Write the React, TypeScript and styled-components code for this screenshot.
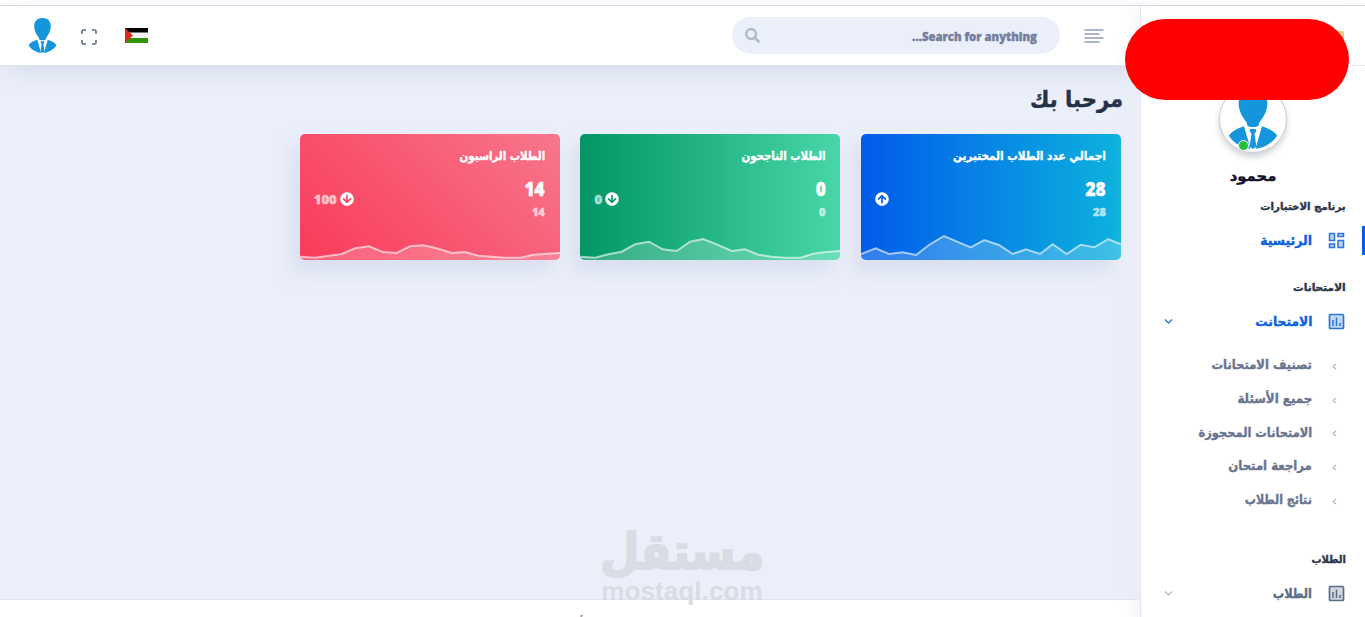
import styled, { createGlobalStyle } from 'styled-components';
import { FaArrowCircleDown, FaArrowCircleUp, FaSearch } from 'react-icons/fa';

const GlobalStyle = createGlobalStyle`
	* {
		box-sizing: border-box;
	}

	body {
		margin: 0;
		overflow: hidden;
		background: #ffffff;
		font-family: 'DejaVu Sans', 'Open Sans', sans-serif;
		font-weight: 700;
	}
`;

const Page = styled.div`
	position: relative;
	display: flex;
	direction: rtl;
	width: 1365px;
	height: 617px;
	padding-top: 5px;
	overflow: hidden;

	&::before {
		content: '';
		position: absolute;
		inset: 5px 0 auto 0;
		height: 1px;
		background: #d9dadd;
		z-index: 3;
	}
`;

/* Scales the glyphs horizontally, the row keeps its own flow size. */
const Label = styled.span<{ $scale?: number; $origin?: string }>`
	display: inline-block;
	white-space: nowrap;
	transform: scaleX(${ p => p.$scale ?? 1 });
	transform-origin: ${ p => p.$origin ?? 'right' } center;
	-webkit-text-stroke: 0.4px currentColor;
`;

/* ---------- sidebar ---------- */

const SidebarContainer = styled.aside`
	position: relative;
	z-index: 2;
	flex: 0 0 225px;
	border-left: 1px solid #e3e6f0;
	background: #ffffff;
	box-shadow: 0 8px 24px #e8ebf6;
`;

const Brand = styled.div`
	display: flex;
	align-items: center;
	height: 61px;
	padding: 0 20px 0 0;
	border-bottom: 1px solid #e6e8ee;
`;

const Profile = styled.div`
	display: flex;
	flex-direction: column;
	align-items: center;
	padding-top: 19px;
`;

const AvatarRing = styled.div`
	position: relative;
	display: flex;
	align-items: center;
	justify-content: center;
	width: 68px;
	height: 68px;
	border: 1px solid #c9cede;
	border-radius: 50%;
	background: #ffffff;
	box-shadow: 0 4px 6px rgba(40, 48, 70, 0.22);
`;

const OnlineDot = styled.span`
	position: absolute;
	left: 18px;
	bottom: 1px;
	width: 11px;
	height: 11px;
	border: 1px solid #ffffff;
	border-radius: 50%;
	background: #22c03c;
`;

const ProfileName = styled.div`
	height: 24px;
	margin-top: 11px;
	color: #14112d;
	font-size: 14px;
	line-height: 24px;
`;

const Category = styled.div<{ $top: number }>`
	height: 20px;
	margin-top: ${ p => p.$top }px;
	padding-right: 19px;
	color: #2c364c;
	font-size: 10px;
	line-height: 20px;
`;

const MenuItem = styled.div<{ $active?: boolean; $current?: boolean }>`
	display: flex;
	align-items: center;
	height: 29px;
	margin-top: 9px;
	padding: 0 17px 0 23px;
	border-right: 3px solid ${ p => p.$current ? '#0162e8' : 'transparent' };
	color: ${ p => p.$active ? '#0b62db' : '#5b6e88' };
	font-size: 13px;
	line-height: 29px;

	> svg:first-child {
		margin-left: 16px;
	}
`;

const Chevron = styled.svg`
	margin-right: auto;
`;

const SubMenu = styled.div`
	padding-top: 12px;
`;

const SubItem = styled.div`
	display: flex;
	align-items: center;
	height: 33.7px;
	padding-right: 28px;
	color: #6a7590;
	font-size: 13px;

	svg {
		margin: 3px 0 0 20px;
	}
`;

/* ---------- main ---------- */

const Main = styled.main`
	display: flex;
	flex: 1;
	flex-direction: column;
	min-width: 0;
	background: #ebeffa;
`;

const Header = styled.header`
	position: relative;
	z-index: 1;
	display: flex;
	flex: 0 0 61px;
	align-items: center;
	padding: 0 36px 0 28px;
	border-bottom: 1px solid #dee4ed;
	background: #ffffff;
	box-shadow: 5px 7px 26px -5px #cdd4e7;

	> svg {
		margin-top: 2px;
	}
`;

const SearchField = styled.div`
	display: flex;
	align-items: center;
	justify-content: space-between;
	width: 328px;
	height: 37px;
	margin-right: 24px;
	padding: 0 23px 0 13px;
	border-radius: 19px;
	background: #ebeffa;
	color: #737f9e;
	font-family: 'Open Sans', sans-serif;
	font-size: 12.5px;
	font-weight: 800;

	span {
		padding-top: 2px;
	}

	svg {
		color: #b1bacb;
	}
`;

const HeaderActions = styled.div`
	display: flex;
	align-items: center;
	margin-right: auto;

	> svg:nth-child(2) {
		margin: 3px 28px 0 24px;
	}
`;

const Content = styled.section`
	flex: 1;
	padding: 17px 17px 0 0;
`;

const Title = styled.h2`
	height: 36px;
	margin: 0;
	color: #242f48;
	font-size: 23px;
	line-height: 32px;
`;

const CardRow = styled.div`
	display: flex;
	gap: 20.6px;
	margin-top: 15px;
	padding-right: 2px;
`;

const Card = styled.article<{ $background: string }>`
	display: flex;
	flex-direction: column;
	width: 260px;
	height: 126px;
	overflow: hidden;
	border-radius: 5px;
	background: ${ p => p.$background };
	box-shadow: -8px 12px 18px 0 rgba(193, 200, 222, 0.4);
	color: #ffffff;
`;

const CardBody = styled.div`
	flex: 0 0 96px;
	padding: 12px 15px 0 14px;
`;

const CardTitle = styled.div`
	height: 20px;
	font-size: 11.5px;
	line-height: 20px;
`;

const CardStats = styled.div`
	display: flex;
	align-items: center;
	justify-content: space-between;
	height: 50px;
	margin-top: 8px;
	font-family: 'Open Sans', sans-serif;
`;

const Amount = styled.div`
	font-size: 18.5px;
	font-weight: 800;
	line-height: 26px;
`;

const SubAmount = styled.div`
	font-size: 11px;
	font-weight: 800;
	line-height: 20px;
	opacity: 0.68;
`;

const Trend = styled.div`
	display: flex;
	align-items: center;
	gap: 3px;
	font-size: 13px;
	font-weight: 800;

	span {
		opacity: 0.68;
	}
`;

const Footer = styled.footer`
	display: flex;
	flex: 0 0 18px;
	justify-content: center;
	overflow: hidden;
	padding-left: 23px;
	border-top: 1px solid #dfe3ed;
	background: #ffffff;
	color: #6b7690;
	font-size: 12px;
	line-height: 46px;
`;

/* ---------- overlays ---------- */

const Redaction = styled.div`
	position: absolute;
	z-index: 5;
	top: 19px;
	left: 1125px;
	width: 224px;
	height: 81px;
	border-radius: 41px;
	background: #ff0000;
`;

const Watermark = styled.div`
	position: absolute;
	z-index: 4;
	top: 523px;
	left: 582px;
	display: flex;
	flex-direction: column;
	align-items: center;
	width: 200px;
	color: #d9dce3;
`;

const WatermarkArabic = styled.div`
	height: 54px;
	font-size: 50px;
	line-height: 58px;

	span {
		-webkit-text-stroke: 2px #d9dce3;
	}
`;

const WatermarkLatin = styled.div`
	direction: ltr;
	font-family: 'Liberation Sans', sans-serif;
	font-size: 26.2px;
	line-height: 28px;
`;

const Person = ({ width, height }: { width: number; height: number }) => (
	<svg width={ width } height={ height } viewBox="0 0 30 36" fill="#1495dc" preserveAspectRatio="none">
		<path d="M15 0C9.500 0 6.400 3.600 6.400 8.600c0 4.800 2.300 8.400 4.500 11.100.6.8.4 1.600.8 2.300.8 1.100 5.800 1.100 6.600 0 .4-.7.2-1.500.8-2.300 2.200-2.700 4.500-6.300 4.500-11.100C23.600 3.600 20.500 0 15 0z" />
		<path d="M9.600 22.300C6 23.500 2.500 25 .500 28c3.400 5 8.500 7.500 13 7.900zM20.400 22.300C24 23.500 27.500 25 29.500 28c-3.400 5-8.500 7.500-13 7.900z" />
		<path d="M13.400 24h3.200l.4 1.300-1.100 1.500 1.100 7.700-2 1.500-2-1.500 1.100-7.700-1.100-1.500z" />
	</svg>
);

const ChartIcon = ({ color }: { color: string }) => (
	<svg width="17" height="17" viewBox="0 0 17 17" fill="none" stroke={ color }>
		<rect x="1.500" y="1.500" width="14" height="14" rx="1" strokeWidth="1.700" fill={ color } fillOpacity="0.28" />
		<path d="M5 7v6M8.500 4.500V13M12 10v3" strokeWidth="1.500" />
	</svg>
);

const DashboardIcon = () => (
	<svg width="17" height="17" viewBox="0 0 17 17" fill="#0162e8" fillOpacity="0.28" stroke="#2b74dc" strokeWidth="1.500">
		<path d="M1.500 1.500h5v7h-5zM10 1.500h5.500v3H10zM1.500 12h5v3.500h-5zM10 8.500h5.500v7H10z" />
	</svg>
);

const Down = ({ color }: { color: string }) => (
	<Chevron width="9" height="7" viewBox="0 0 9 7" fill="none" stroke={ color } strokeWidth="1.300">
		<path d="M1 1.500l3.500 3.500L8 1.500" />
	</Chevron>
);

const submenu = [
	{ text: 'تصنيف الامتحانات', scale: 0.89 },
	{ text: 'جميع الأسئلة', scale: 0.91 },
	{ text: 'الامتحانات المحجوزة', scale: 0.88 },
	{ text: 'مراجعة امتحان', scale: 0.9 },
	{ text: 'نتائج الطلاب', scale: 0.85 }
];

const cards = [
	{
		title: 'اجمالي عدد الطلاب المختبرين',
		scale: 0.91,
		amount: '28',
		trend: '',
		up: true,
		background: 'linear-gradient(to left, #0db2de 0%, #005bea 100%)',
		line: '0,24 14.7,18.3 28,24 41.7,22.3 55,25 69,14.3 83,6 109.7,17.3 123.3,10 138,15 151.7,24 165,19.3 179,24 191.7,14.3 205.7,24 219.7,14.7 233.3,17.3 247.3,9 260,14.3'
	},
	{
		title: 'الطلاب الناجحون',
		scale: 0.89,
		amount: '0',
		trend: '0',
		up: false,
		background: 'linear-gradient(to left, #48d6a8 0%, #029666 100%)',
		line: '0,26.7 15,27.7 28.3,24.3 41.7,21.7 55,14.3 69,11.7 82.7,19.3 96.7,21 110,11.7 123.3,9 136.7,14.3 151.7,21 165,19.3 178.3,24.7 191.7,26.7 205,27.7 220.7,27.7 233.3,23.7 246,22 260,21'
	},
	{
		title: 'الطلاب الراسبون',
		scale: 0.89,
		amount: '14',
		trend: '100',
		up: false,
		background: 'linear-gradient(45deg, #f93a5a, #f7778c)',
		line: '0,26.7 15,27.7 41.7,24 55,18.3 69,16.3 82.7,22 96.7,23 110,16.3 123.3,15.3 136.7,18.3 151.7,23 165,22 178.3,25.7 205,27.7 220.7,27.7 233.3,24.7 260,23'
	}
];

const Sidebar = () => (
	<SidebarContainer>
		<Brand>
			<svg width="12" height="50" viewBox="0 0 12 50">
				<path d="M0 22q5-2 11-.5v9.500H0z" fill="#e9cf7c" />
				<path d="M0 50L9 50l2.500-7V60z" fill="#f3e3b0" />
			</svg>
		</Brand>
		<Profile>
			<AvatarRing>
				<Person width={ 50 } height={ 60 } />
				<OnlineDot />
			</AvatarRing>
			<ProfileName><Label $scale={ 1.06 } $origin="center">محمود</Label></ProfileName>
		</Profile>
		<Category $top={ 9 }><Label $scale={ 1.02 }>برنامج الاختبارات</Label></Category>
		<MenuItem $active $current>
			<DashboardIcon />
			<Label $scale={ 0.96 }>الرئيسية</Label>
		</MenuItem>
		<Category $top={ 23 }><Label $scale={ 1.06 }>الامتحانات</Label></Category>
		<MenuItem $active>
			<ChartIcon color="#2b74dc" />
			<Label $scale={ 0.945 }>الامتحانت</Label>
			<Down color="#2b74dc" />
		</MenuItem>
		<SubMenu>
			{ submenu.map(item => (
				<SubItem key={ item.text }>
					<svg width="5" height="7" viewBox="0 0 5 7" fill="none" stroke="#7b8191">
						<path d="M3.800 .8L1.200 3.500l2.600 2.700" />
					</svg>
					<Label $scale={ item.scale }>{ item.text }</Label>
				</SubItem>
			)) }
		</SubMenu>
		<Category $top={ 34 }><Label>الطلاب</Label></Category>
		<MenuItem>
			<ChartIcon color="#5b6e88" />
			<Label $scale={ 0.87 }>الطلاب</Label>
			<Down color="#b4bdce" />
		</MenuItem>
	</SidebarContainer>
);

const App = () => {
	return (
		<Page>
			<GlobalStyle />
			<Sidebar />
			<Main>
				<Header>
					<svg width="20" height="14" viewBox="0 0 20 14" stroke="#a9b3cb" strokeWidth="1.900">
						<path d="M.5 1h19M.5 5h15M.5 9h19M.5 13h15" />
					</svg>
					<SearchField>
						<Label $scale={ 0.905 }>Search for anything...</Label>
						<FaSearch size={ 15 } />
					</SearchField>
					<HeaderActions>
						<svg width="23" height="15" viewBox="0 0 23 15">
							<path d="M0 0h23v5H0z" fill="#000000" />
							<path d="M0 4.500h23V10H0z" fill="#f4f4f4" />
							<path d="M0 10h23v5H0z" fill="#34930d" />
							<path d="M0 0l8 7.500L0 15z" fill="#dc2c18" />
						</svg>
						<svg width="16" height="16" viewBox="0 0 16 16" fill="none" stroke="#5b6e88" strokeWidth="1.600">
							<path d="M5 1H2.500Q1 1 1 2.500V5M11 1h2.500Q15 1 15 2.500V5M5 15H2.500Q1 15 1 13.500V11M11 15h2.500q1.500 0 1.500-1.500V11" />
						</svg>
						<Person width={ 29 } height={ 35 } />
					</HeaderActions>
				</Header>
				<Content>
					<Title><Label $scale={ 0.92 }>مرحبا بك</Label></Title>
					<CardRow>
						{ cards.map(card => (
							<Card key={ card.title } $background={ card.background }>
								<CardBody>
									<CardTitle><Label $scale={ card.scale }>{ card.title }</Label></CardTitle>
									<CardStats>
										<div>
											<Amount><Label $scale={ 0.93 }>{ card.amount }</Label></Amount>
											<SubAmount><Label>{ card.amount }</Label></SubAmount>
										</div>
										<Trend>
											{ card.up ? <FaArrowCircleUp size={ 14 } /> : <FaArrowCircleDown size={ 14 } /> }
											{ card.trend && <Label>{ card.trend }</Label> }
										</Trend>
									</CardStats>
								</CardBody>
								<svg width="260" height="30" viewBox="0 0 260 30">
									<polygon points={ `0,30 ${ card.line } 260,30` } fill="#ffffff" fillOpacity="0.2" />
									<polyline points={ card.line } fill="none" stroke="#ffffff" strokeOpacity="0.6" strokeWidth="2" />
								</svg>
							</Card>
						)) }
					</CardRow>
				</Content>
				<Footer>أ</Footer>
			</Main>
			<Watermark>
				<WatermarkArabic><Label $scale={ 0.9 } $origin="center">مستقل</Label></WatermarkArabic>
				<WatermarkLatin>mostaql.com</WatermarkLatin>
			</Watermark>
			<Redaction />
		</Page>
	);
}

export default App;
